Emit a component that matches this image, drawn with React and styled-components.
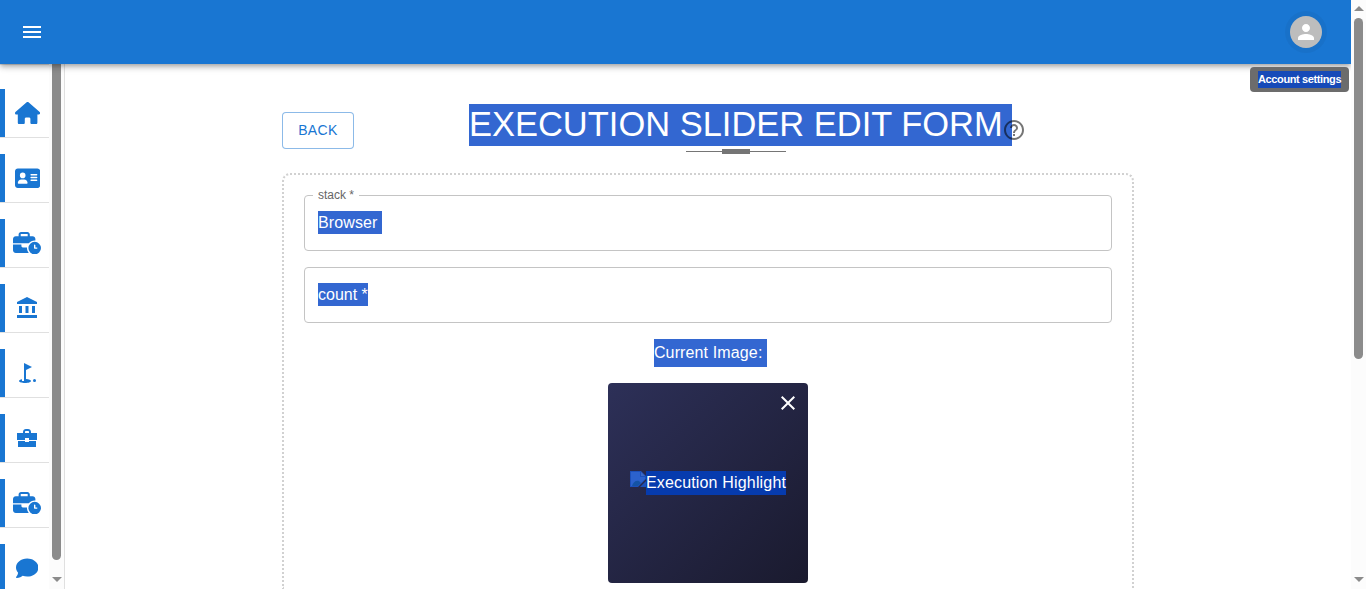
import React from "react";
import styled, { createGlobalStyle } from "styled-components";
import { FaHouse, FaAddressCard, FaBusinessTime, FaComment } from "react-icons/fa6";

const Global = createGlobalStyle`
  *, *::before, *::after { box-sizing: border-box; }
  html, body { margin: 0; overflow: hidden; }
  body { background: #fff; color: #000; font-family: "Liberation Sans", Arial, sans-serif; font-size: 16px; }
`;

const Shell = styled.div`
  display: flex;
  height: 589px;
  width: 1366px;
  overflow: hidden;
`;

const Page = styled.div`
  display: flex;
  flex-direction: column;
  width: 1351px;
  height: 100%;
  position: relative;
`;

const AppBar = styled.header`
  flex: none;
  display: flex;
  align-items: center;
  justify-content: space-between;
  height: 64px;
  padding: 0 29px 0 20px;
  background: #1976d2;
  box-shadow: 0 2px 4px -1px rgba(0, 0, 0, 0.2), 0 4px 5px rgba(0, 0, 0, 0.14), 0 1px 10px rgba(0, 0, 0, 0.12);
  clip-path: inset(0 0 -20px 0);
  z-index: 2;
`;

const IconButton = styled.button`
  display: flex;
  padding: 0;
  border: 0;
  background: none;
  color: #fff;
`;

const Avatar = styled.div`
  display: flex;
  align-items: center;
  justify-content: center;
  width: 32px;
  height: 32px;
  border-radius: 50%;
  background: #bdbdbd;
  color: #fff;
  box-shadow: 0 0 0 5px rgba(0, 0, 0, 0.04);
`;

const Tooltip = styled.div`
  position: absolute;
  top: 67px;
  left: 1250px;
  width: 99px;
  height: 25px;
  padding: 4px 8px;
  border-radius: 4px;
  background: #6c6c6c;
  z-index: 3;
  font-size: 11px;
  font-weight: 700;
  line-height: 17px;
  white-space: nowrap;
`;

const Selected = styled.span`
  display: inline-block;
  background: ${(p) => p.$bg || "#3367d1"};
  color: #fff;
  letter-spacing: ${(p) => p.$spacing || 0}px;
  white-space: pre;
`;

const Body = styled.div`
  display: flex;
  flex: 1;
  min-height: 0;
`;

const Sidebar = styled.aside`
  display: flex;
  flex: none;
  width: 65px;
  border-right: 1px solid #e0e0e0;
  overflow: hidden;
`;

const NavList = styled.nav`
  display: flex;
  flex-direction: column;
  gap: 16px;
  width: 49px;
  padding-top: 24px;
  border-top: 1px solid #e0e0e0;
  overflow: hidden;
`;

const NavItem = styled.a`
  flex: none;
  display: flex;
  align-items: center;
  justify-content: center;
  height: 49px;
  padding-left: 5px;
  border-bottom: 1px solid #e0e0e0;
  background: linear-gradient(#1976d2, #1976d2) 0 0 / 5px 48px no-repeat;
  color: #1976d2;
`;

const NavIcon = styled.span`
  flex: none;
  display: flex;
  justify-content: center;
  margin-left: ${(p) => p.$shift || 0}px;
  svg { flex: none; width: ${(p) => p.$width}px; height: ${(p) => p.$height || 22.4}px; }
`;

const ScrollTrack = styled.div`
  flex: none;
  display: flex;
  flex-direction: column;
  align-items: center;
  justify-content: space-between;
  width: 15px;
  height: 100%;
  padding: ${(p) => (p.$inner ? "0 0 7px" : "6px 0 7px")};
  background: #fcfcfc;
`;

const Thumb = styled.div`
  width: 9px;
  height: ${(p) => p.$height}px;
  margin-top: ${(p) => p.$top || 0}px;
  margin-bottom: auto;
  border-radius: ${(p) => (p.$inner ? "0 0 5px 5px" : "5px")};
  background: #8b8b8b;
`;

const Arrow = styled.div`
  width: 0;
  height: 0;
  border-left: 5px solid transparent;
  border-right: 5px solid transparent;
  border-${(p) => (p.$up ? "bottom" : "top")}: 5px solid #8b8b8b;
`;

const Main = styled.main`
  flex: 1;
  display: flex;
  flex-direction: column;
  min-height: 0;
  padding: 40px 217px 0;
`;

const Heading = styled.div`
  flex: none;
  display: grid;
  grid-template-columns: 187px 1fr;
  height: 69px;
`;

const BackButton = styled.button`
  width: 72px;
  height: 37px;
  margin-top: 8px;
  padding: 0 0 1px;
  border: 1px solid rgba(25, 118, 210, 0.5);
  border-radius: 4px;
  background: #fff;
  color: #1976d2;
  font: 14px/24px "Liberation Sans", Arial, sans-serif;
  letter-spacing: 0.4px;
`;

const TitleRow = styled.div`
  display: flex;
  height: 42px;
`;

const Title = styled.h1`
  margin: 0;
  font-size: 34.48px;
  font-weight: 400;
  line-height: 40px;
  white-space: nowrap;
  ${Selected} { padding-bottom: 2px; }
`;

const HelpIcon = styled.svg`
  width: 24px;
  height: 24px;
  margin: 14px 0 0 -10px;
  fill: rgba(0, 0, 0, 0.54);
  position: relative;
`;

const Divider = styled.div`
  display: flex;
  align-items: center;
  justify-content: center;
  width: 100px;
  height: 5px;
  margin: 3px 0 0 217px;
  background: linear-gradient(#757575, #757575) 0 2px / 100% 1px no-repeat;
  &::after { content: ""; width: 28px; height: 5px; background: #757575; }
`;

const Form = styled.form`
  display: flex;
  flex-direction: column;
  align-items: center;
  flex: 1;
  min-height: 0;
  width: 852px;
  padding: 20px 20px 0;
  border: 2px dotted #d1d1d1;
  border-bottom: 0;
  border-radius: 8px 8px 0 0;
`;

const Field = styled.div`
  flex: none;
  position: relative;
  width: 808px;
  height: 56px;
  margin-bottom: 16px;
  padding: 15px 13px;
  border: 1px solid #c4c4c4;
  border-radius: 4px;
  line-height: 23px;
`;

const FieldLabel = styled.label`
  position: absolute;
  top: -9px;
  left: 8px;
  padding: 0 5px;
  background: #fff;
  color: #666;
  font-size: 12px;
  line-height: 16px;
`;

const Caption = styled.div`
  flex: none;
  height: 28px;
  margin: 0 0 16px 5px;
  line-height: 28px;
`;

const Preview = styled.div`
  flex: none;
  display: flex;
  align-items: center;
  justify-content: center;
  position: relative;
  width: 200px;
  height: 200px;
  border-radius: 4px;
  background: linear-gradient(135deg, #2d3058 0%, #1a1a2e 100%);
`;

const CloseButton = styled(IconButton)`
  position: absolute;
  top: 8px;
  right: 8px;
`;

const BrokenImage = styled.div`
  display: flex;
  align-items: flex-start;
  height: 24px;
  line-height: 24px;
`;

const Glyph = ({ d, children }) => (
  <svg width="24" height="24" viewBox="0 0 24 24" fill="currentColor">
    <path d={d} />
    {children}
  </svg>
);

const navItems = [
  { width: 25.2, shift: 1, icon: <FaHouse /> },
  { width: 25.2, shift: 1, icon: <FaAddressCard /> },
  { width: 28, icon: <FaBusinessTime /> },
  { width: 24, height: 24, icon: <Glyph d="M4 10h3v7H4zm6.5 0h3v7h-3zM2 19h20v3H2zm15-9h3v7h-3zm-5-9L2 6v2h20V6z" /> },
  {
    width: 24,
    height: 24,
    icon: (
      <Glyph d="M17 5.92 9 2v18H7v-1.73c-1.79.35-3 .99-3 1.73 0 1.1 2.69 2 6 2s6-.9 6-2c0-.99-2.16-1.81-5-1.97V8.98l6-3.06z">
        <circle cx="19.5" cy="19.5" r="1.5" />
      </Glyph>
    ),
  },
  {
    width: 24,
    height: 24,
    icon: <Glyph d="M10 16v-1H3v6h18v-6h-7v1h-4zm12-9h-6V6c0-1.7-1.3-3-3-3h-2C9.3 3 8 4.3 8 6v1H2v7h8v-2h4v2h8V7zm-8 0h-4V6c0-.6.4-1 1-1h2c.6 0 1 .4 1 1v1z" />,
  },
  { width: 28, icon: <FaBusinessTime /> },
  { width: 22.4, icon: <FaComment /> },
];

export default function App() {
  return (
    <Shell>
      <Global />
      <Page>
        <AppBar>
          <IconButton aria-label="menu">
            <Glyph d="M3 18h18v-2H3v2zm0-5h18v-2H3v2zm0-7v2h18V6H3z" />
          </IconButton>
          <Avatar>
            <Glyph d="M12 12c2.21 0 4-1.79 4-4s-1.79-4-4-4-4 1.79-4 4 1.79 4 4 4zm0 2c-2.67 0-8 1.34-8 4v2h16v-2c0-2.66-5.33-4-8-4z" />
          </Avatar>
        </AppBar>
        <Tooltip><Selected $bg="#164ab8" $spacing={-0.38}>Account settings</Selected></Tooltip>
        <Body>
          <Sidebar>
            <NavList>
              {navItems.map((item, i) => (
                <NavItem key={i}>
                  <NavIcon $width={item.width} $height={item.height} $shift={item.shift}>{item.icon}</NavIcon>
                </NavItem>
              ))}
            </NavList>
            <ScrollTrack $inner>
              <Thumb $inner $height={496} />
              <Arrow />
            </ScrollTrack>
          </Sidebar>
          <Main>
            <Heading>
              <BackButton>BACK</BackButton>
              <div>
                <TitleRow>
                  <Title><Selected>{"EXECUTION SLIDER EDIT FORM "}</Selected></Title>
                  <HelpIcon viewBox="0 0 24 24">
                    <path d="M11 18h2v-2h-2v2zm1-16C6.48 2 2 6.48 2 12s4.48 10 10 10 10-4.48 10-10S17.52 2 12 2zm0 18c-4.41 0-8-3.59-8-8s3.59-8 8-8 8 3.59 8 8-3.59 8-8 8zm0-14c-2.21 0-4 1.79-4 4h2c0-1.1.9-2 2-2s2 .9 2 2c0 2-3 1.75-3 5h2c0-2.25 3-2.5 3-5 0-2.21-1.79-4-4-4z" />
                  </HelpIcon>
                </TitleRow>
                <Divider />
              </div>
            </Heading>
            <Form>
              <Field>
                <FieldLabel>stack *</FieldLabel>
                <Selected $spacing={0.12}>{"Browser "}</Selected>
              </Field>
              <Field><Selected>count *</Selected></Field>
              <Caption><Selected $spacing={0.13}>{"Current Image: "}</Selected></Caption>
              <Preview>
                <CloseButton type="button" aria-label="remove">
                  <Glyph d="M19 6.41 17.59 5 12 10.59 6.41 5 5 6.41 10.59 12 5 17.59 6.41 19 12 13.41 17.59 19 19 17.59 13.41 12z" />
                </CloseButton>
                <BrokenImage>
                  <svg width="16" height="16" viewBox="0 0 16 16">
                    <path d="M0 0H11L16 5V8L8 16H0z" fill="#1c50ba" />
                    <path d="M1 1H10V6H15V8L8 15H1z" fill="#2c62cd" />
                    <path d="M2 15C3 11 6 9 9 10L11 12 8 15z" fill="#1453a5" />
                    <path d="M11 1V5H15z" fill="#3c68c4" />
                    <path d="M16 10V16H10z" fill="#1c50ba" />
                  </svg>
                  <Selected $bg="#063bae" $spacing={0.17}>Execution Highlight</Selected>
                </BrokenImage>
              </Preview>
            </Form>
          </Main>
        </Body>
      </Page>
      <ScrollTrack>
        <Arrow $up />
        <Thumb $top={7} $height={341} />
        <Arrow />
      </ScrollTrack>
    </Shell>
  );
}
